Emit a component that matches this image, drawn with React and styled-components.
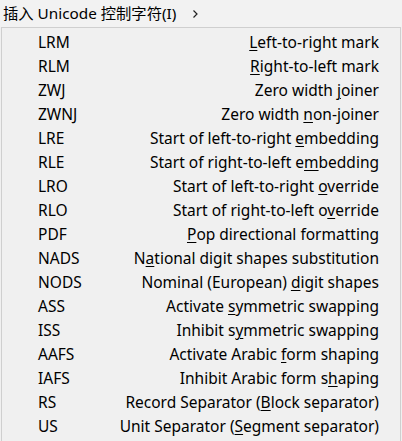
import React from "react";
import styled, { createGlobalStyle } from "styled-components";

const Global = createGlobalStyle`
  html, body { margin: 0; padding: 0; background: #f0f0f0; }
  body {
    font-family: "Noto Sans", "Noto Sans CJK SC", sans-serif;
    color: #000;
    width: 402px;
    height: 441px;
    overflow: hidden;
  }
`;

const Header = styled.div`
  height: 27px;
  display: flex;
  align-items: center;
  padding-left: 3px;
  font-size: 15.3px;
  background: #f2f2f2;
  box-sizing: border-box;
`;

const HeaderLabel = styled.span`
  line-height: 1;
`;

const Chevron = styled.span`
  margin-left: 16px;
  line-height: 1;
  display: flex;
  align-items: center;
`;

const Menu = styled.div`
  margin-left: 1px;
  width: 400px;
  box-sizing: border-box;
  border: 1px solid #cfcfcf;
  background: #f0f0f0;
  padding: 2px 0 3px;
`;

const Row = styled.div`
  height: 24px;
  display: grid;
  grid-template-columns: 1fr auto;
  align-items: center;
  padding: 0 21px 0 36px;
  font-size: 15.5px;
  white-space: nowrap;
`;

const Code = styled.span``;

const Desc = styled.span`
  text-align: right;
  u {
    text-decoration: underline;
    text-decoration-thickness: 1px;
    text-underline-offset: 2px;
  }
`;

const items = [
  ["LRM", "", "L", "eft-to-right mark"],
  ["RLM", "", "R", "ight-to-left mark"],
  ["ZWJ", "Zero width ", "j", "oiner"],
  ["ZWNJ", "Zero width ", "n", "on-joiner"],
  ["LRE", "Start of left-to-right ", "e", "mbedding"],
  ["RLE", "Start of right-to-left e", "m", "bedding"],
  ["LRO", "Start of left-to-right ", "o", "verride"],
  ["RLO", "Start of right-to-left o", "v", "erride"],
  ["PDF", "", "P", "op directional formatting"],
  ["NADS", "N", "a", "tional digit shapes substitution"],
  ["NODS", "Nominal (European) ", "d", "igit shapes"],
  ["ASS", "Activate ", "s", "ymmetric swapping"],
  ["ISS", "Inhibit s", "y", "mmetric swapping"],
  ["AAFS", "Activate Arabic ", "f", "orm shaping"],
  ["IAFS", "Inhibit Arabic form s", "h", "aping"],
  ["RS", "Record Separator (", "B", "lock separator)"],
  ["US", "Unit Separator (", "S", "egment separator)"],
];

export default function App() {
  return (
    <>
      <Global />
      <Header>
        <HeaderLabel>插入 Unicode 控制字符(I)</HeaderLabel>
        <Chevron>
          <svg width="7" height="10" viewBox="0 0 7 10">
            <path d="M1.5 1.5 L5 5 L1.5 8.5" fill="none" stroke="#222" strokeWidth="1.2" />
          </svg>
        </Chevron>
      </Header>
      <Menu>
        {items.map(([code, pre, key, post]) => (
          <Row key={code}>
            <Code>{code}</Code>
            <Desc>
              {pre}
              <u>{key}</u>
              {post}
            </Desc>
          </Row>
        ))}
      </Menu>
    </>
  );
}
